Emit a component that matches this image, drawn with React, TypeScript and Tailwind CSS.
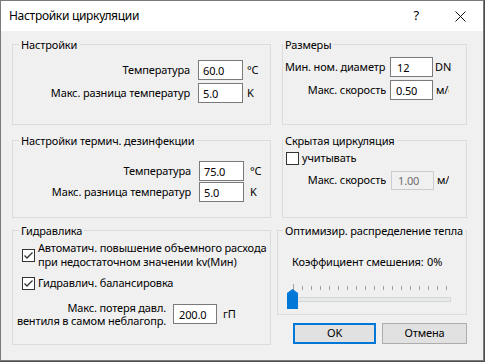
import React from "react";

function Check({ on }: { on?: boolean }) {
  return (
    <svg width="13" height="13" className="shrink-0">
      <rect x="0.5" y="0.5" width="12" height="12" fill="white" stroke="#333333" />
      {on && <path d="M2.5 6.5 L5 9 L10.5 3.5" fill="none" stroke="#333333" strokeWidth="1.3" />}
    </svg>
  );
}

function Slider() {
  const ticks = Array.from({ length: 18 }, (_, i) => 6 + i * 9);
  return (
    <svg width="165" height="26" className="ml-[9px] mt-[15px] block">
      {ticks.map((x, i) => (
        <line key={i} x1={x + 0.5} x2={x + 0.5} y1={i === 0 ? 0 : 2} y2={6} stroke="#a0a0a0" />
      ))}
      <rect x="3.5" y="13.5" width="160" height="4" fill="#e7eaea" stroke="#d6d6d6" />
      <polygon points="0,9 5.5,5 11,9 11,25 0,25" fill="#0078d7" />
    </svg>
  );
}

export default function App() {
  return (
    <div className="w-[485px] h-[362px] bg-[#4a4f55] font-['Segoe_UI','Noto_Sans',sans-serif] text-[11px] tracking-[-0.15px] text-black">
      <div className="w-[484px] h-[361px] border border-[#7a7a7a] bg-[#f0f0f0] flex flex-col">
        {/* title bar */}
        <div className="h-[30px] bg-white flex items-center shrink-0">
          <span className="ml-[8px] text-[12px] tracking-[-0.3px]">Настройки циркуляции</span>
          <span className="ml-auto mr-[36px] text-[13px]">?</span>
          <svg width="11" height="11" className="mr-[17px]">
            <path d="M0.5 0.5 L10.5 10.5 M10.5 0.5 L0.5 10.5" stroke="#111" strokeWidth="1" />
          </svg>
        </div>

        <div className="flex pl-[11px]">
          {/* left column */}
          <div className="flex flex-col w-[259px]">
            <fieldset className="mt-[7px] h-[87px] border border-[#dcdcdc]">
              <legend className="ml-[6px] px-[2px] h-[13px] leading-[13px]">Настройки</legend>
              <div className="pt-[9px] flex flex-col gap-[3px]">
                <div className="flex items-center h-[20px]">
                  <span className="w-[177px] text-right whitespace-nowrap">Температура</span>
                  <input readOnly value="60.0" className="ml-[8px] w-[45px] h-[20px] border border-[#7a7a7a] bg-white pl-[4px] outline-none" />
                  <span className="ml-[4px]">°C</span>
                </div>
                <div className="flex items-center h-[20px]">
                  <span className="w-[177px] text-right whitespace-nowrap">Макс. разница температур</span>
                  <input readOnly value="5.0" className="ml-[8px] w-[45px] h-[20px] border border-[#7a7a7a] bg-white pl-[4px] outline-none" />
                  <span className="ml-[4px]">K</span>
                </div>
              </div>
            </fieldset>

            <fieldset className="mt-[9px] h-[84px] border border-[#dcdcdc]">
              <legend className="ml-[6px] px-[2px] h-[13px] leading-[13px] whitespace-nowrap">Настройки термич. дезинфекции</legend>
              <div className="pt-[14px] flex flex-col gap-[1px]">
                <div className="flex items-center h-[20px]">
                  <span className="w-[178px] text-right whitespace-nowrap">Температура</span>
                  <input readOnly value="75.0" className="ml-[8px] w-[45px] h-[20px] border border-[#7a7a7a] bg-white pl-[4px] outline-none" />
                  <span className="ml-[6px]">°C</span>
                </div>
                <div className="flex items-center h-[20px]">
                  <span className="w-[178px] text-right whitespace-nowrap">Макс. разница температур</span>
                  <input readOnly value="5.0" className="ml-[8px] w-[45px] h-[20px] border border-[#7a7a7a] bg-white pl-[4px] outline-none" />
                  <span className="ml-[6px]">K</span>
                </div>
              </div>
            </fieldset>

            <fieldset className="mt-[6px] h-[121px] border border-[#dcdcdc]">
              <legend className="ml-[6px] px-[2px] h-[13px] leading-[13px]">Гидравлика</legend>
              <div className="pt-[4px] pl-[9px] flex items-center">
                <Check on />
                <span className="ml-[3px] leading-[14px] whitespace-nowrap">
                  Автоматич. повышение объемного расхода
                  <br />
                  при недостаточном значении kv(Мин)
                </span>
              </div>
              <div className="mt-[7px] pl-[9px] h-[14px] flex items-center">
                <Check on />
                <span className="ml-[3px] whitespace-nowrap">Гидравлич. балансировка</span>
              </div>
              <div className="mt-[11px] flex items-center">
                <div className="w-[153px] flex flex-col items-end leading-[13px] whitespace-nowrap">
                  <span>Макс. потеря давл.</span>
                  <span>вентиля в самом неблагопр.</span>
                </div>
                <input readOnly value="200.0" className="ml-[7px] w-[44px] h-[20px] border border-[#7a7a7a] bg-white pl-[5px] outline-none" />
                <span className="ml-[6px]">гП</span>
              </div>
            </fieldset>
          </div>

          {/* right column */}
          <div className="flex flex-col ml-[6px] w-[190px]">
            <fieldset className="ml-[5px] mt-[7px] w-[185px] h-[87px] border border-[#dcdcdc]">
              <legend className="ml-[0px] px-[2px] h-[13px] leading-[13px]">Размеры</legend>
              <div className="pt-[6px] flex flex-col gap-[3px]">
                <div className="flex items-center h-[20px]">
                  <span className="w-[107px] pl-[2px] text-left whitespace-nowrap">Мин. ном. диаметр</span>
                  <input readOnly value="12" className="w-[43px] h-[20px] border border-[#7a7a7a] bg-white pl-[6px] outline-none" />
                  <span className="ml-[2px] w-[16px] overflow-hidden whitespace-nowrap">DN</span>
                </div>
                <div className="flex items-center h-[20px]">
                  <span className="w-[107px] pr-[4px] text-right whitespace-nowrap">Макс. скорость</span>
                  <input readOnly value="0.50" className="w-[43px] h-[20px] border border-[#7a7a7a] bg-white pl-[5px] outline-none" />
                  <span className="ml-[3px] w-[13px] overflow-hidden whitespace-nowrap">м/с</span>
                </div>
              </div>
            </fieldset>

            <fieldset className="ml-[5px] mt-[9px] w-[185px] h-[84px] border border-[#dcdcdc]">
              <legend className="ml-[0px] px-[2px] h-[13px] leading-[13px] whitespace-nowrap">Скрытая циркуляция</legend>
              <div className="pt-[4px] pl-[3px] h-[19px] flex items-center">
                <Check />
                <span className="ml-[3px]">учитывать</span>
              </div>
              <div className="mt-[5px] flex items-center h-[19px]">
                <span className="w-[103px] text-right whitespace-nowrap">Макс. скорость</span>
                <input readOnly value="1.00" className="ml-[5px] w-[43px] h-[19px] border border-[#cccccc] bg-[#f0f0f0] text-[#6d6d6d] pl-[6px] outline-none" />
                <span className="ml-[3px] w-[12px] overflow-hidden whitespace-nowrap">м/с</span>
              </div>
            </fieldset>

            <fieldset className="mt-[6px] w-[190px] h-[91px] border border-[#dcdcdc]">
              <legend className="ml-[5px] px-[2px] h-[13px] leading-[13px] whitespace-nowrap">Оптимизир. распределение тепла</legend>
              <div className="pt-[18px] pl-[14px] flex items-center leading-[14px]">
                <span className="w-[135px] whitespace-nowrap">Коэффициент смешения:</span>
                <span>0%</span>
              </div>
              <Slider />
            </fieldset>

            <div className="mt-[8px] flex justify-end gap-[6px]">
              <button className="w-[83px] h-[21px] border-2 border-[#0078d7] bg-[#e1e1e1]">OK</button>
              <button className="w-[85px] h-[21px] border border-[#adadad] bg-[#e1e1e1]">Отмена</button>
            </div>
          </div>
        </div>
      </div>
    </div>
  );
}
